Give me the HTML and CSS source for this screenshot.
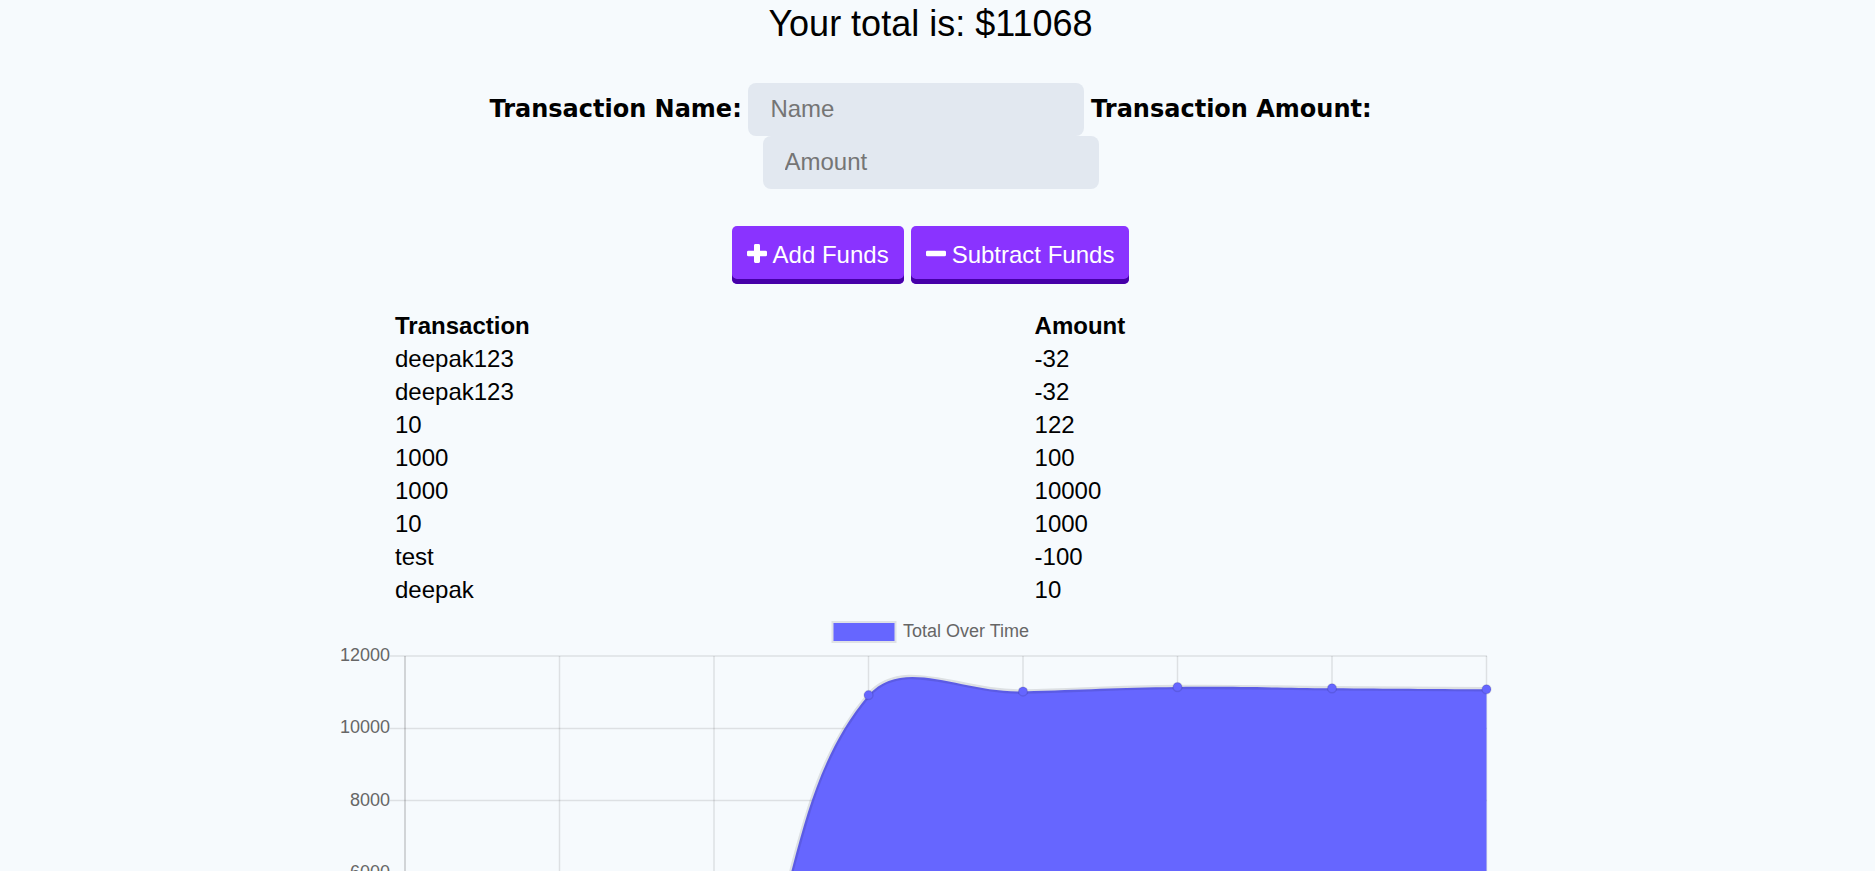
FILE: index.html
```html
<!DOCTYPE html>
<html lang="en">
<head>
  <meta charset="utf-8">
  <title>Budget Tracker</title>
  <link rel="stylesheet" href="styles.css">
</head>
<body>
  <main class="wrapper">
    <h1 class="total">Your total is: $<span id="total">11068</span></h1>

    <form class="form">
      <div class="fields">
        <label class="label" for="t-name">Transaction Name:</label>
        <input class="input" type="text" id="t-name" placeholder="Name">
        <label class="label" for="t-amount">Transaction Amount:</label>
        <input class="input" type="text" id="t-amount" placeholder="Amount">
      </div>
      <div class="actions">
        <button class="button" type="button">
          <svg class="icon" viewBox="0 0 20 24" aria-hidden="true"><path d="M8.4 2h3.2a1.4 1.4 0 0 1 1.4 1.4V8.700h5.600a1.400 1.400 0 0 1 1.400 1.400v2.800a1.400 1.400 0 0 1-1.400 1.400H13v5.300a1.400 1.400 0 0 1-1.400 1.400H8.400A1.400 1.400 0 0 1 7 19.600V14.300H1.400A1.400 1.400 0 0 1 0 12.900v-2.800A1.400 1.400 0 0 1 1.400 8.700H7V3.400A1.400 1.400 0 0 1 8.400 2z"/></svg>
          Add Funds
        </button>
        <button class="button" type="button">
          <svg class="icon" viewBox="0 0 20 24" aria-hidden="true"><rect x="0" y="8.700" width="20" height="5.600" rx="1.400"/></svg>
          Subtract Funds
        </button>
      </div>
    </form>

    <table class="transactions">
      <thead>
        <tr><th>Transaction</th><th>Amount</th></tr>
      </thead>
      <tbody>
        <tr><td>deepak123</td><td>-32</td></tr>
        <tr><td>deepak123</td><td>-32</td></tr>
        <tr><td>10</td><td>122</td></tr>
        <tr><td>1000</td><td>100</td></tr>
        <tr><td>1000</td><td>10000</td></tr>
        <tr><td>10</td><td>1000</td></tr>
        <tr><td>test</td><td>-100</td></tr>
        <tr><td>deepak</td><td>10</td></tr>
      </tbody>
    </table>

    <svg class="chart" viewBox="0 0 1200 600" role="img" aria-label="Total Over Time">
      <rect class="swatch" x="501.500" y="16" width="63" height="20"/>
      <text class="tick" x="572" y="31">Total Over Time</text>
      <g fill="none" stroke-width="1.5">
        <path class="grid" d="M59 50H1156M59 122.500H1156M59 194.500H1156M59 267H1156M59 339.500H1156M59 412H1156M59 556.500H1156"/>
        <path class="grid" d="M228.500 50V571M383 50V571M537.500 50V571M692 50V571M846.500 50V571M1001 50V571M1155.500 50V571"/>
        <path class="axis" d="M74 50V571M59 484H1156"/>
      </g>
      <g class="tick tick-y">
        <text x="59" y="55">12000</text>
        <text x="59" y="127">10000</text>
        <text x="59" y="200">8000</text>
        <text x="59" y="272">6000</text>
        <text x="59" y="345">4000</text>
        <text x="59" y="417">2000</text>
        <text x="59" y="490">0</text>
        <text x="59" y="562">-2000</text>
      </g>
      <path class="area" d="M74 483.600C135.800 485.100 167.500 493.700 228.500 487.300C291.100 480.700 347.500 496.900 383 451.100C471.100 337.600 448.700 194.200 537.500 89.100C572.300 49.600 630.200 87 692 85.400C753.800 83.800 784.700 81.600 846.500 81C908.300 80.400 939.200 81.700 1001 82.200C1062.800 82.700 1093.700 82.900 1155.500 83.300V484H74z"/>
      <path class="line" fill="none" stroke-width="4.5" d="M74 483.600C135.800 485.100 167.500 493.700 228.500 487.300C291.100 480.700 347.500 496.900 383 451.100C471.100 337.600 448.700 194.200 537.500 89.100C572.300 49.600 630.200 87 692 85.400C753.800 83.800 784.700 81.600 846.500 81C908.300 80.400 939.200 81.700 1001 82.200C1062.800 82.700 1093.700 82.900 1155.500 83.300"/>
      <g class="point" stroke-width="1.5">
        <circle cx="74" cy="483.600" r="4.500"/>
        <circle cx="228.500" cy="487.300" r="4.500"/>
        <circle cx="383" cy="451.100" r="4.500"/>
        <circle cx="537.500" cy="89.100" r="4.500"/>
        <circle cx="692" cy="85.400" r="4.500"/>
        <circle cx="846.500" cy="81" r="4.500"/>
        <circle cx="1001" cy="82.200" r="4.500"/>
        <circle cx="1155.500" cy="83.300" r="4.500"/>
      </g>
    </svg>
  </main>
</body>
</html>
```

FILE: styles.css
```css
* {
  box-sizing: border-box;
}

body {
  margin: 0;
  padding-right: 14px;
  background: #f6fafd;
  color: #000;
  font: 24px/31px "Liberation Sans", Arial, sans-serif;
}

.wrapper {
  max-width: 1200px;
  margin: 0 auto;
}

.total {
  margin: 0;
  font-size: 36px;
  font-weight: 400;
  line-height: 47px;
  text-align: center;
}

.form {
  padding-top: 36px;
  text-align: center;
}

.label {
  font-family: "Arial Black", "DejaVu Sans", sans-serif;
  font-weight: 900;
  vertical-align: middle;
}

.input {
  width: 336px;
  height: 53px;
  padding: 0 22px 2px;
  border: 0;
  border-radius: 8px;
  background: #e2e8f0;
  font: inherit;
  vertical-align: middle;
}

.input::placeholder {
  color: #757575;
}

.actions {
  display: flex;
  justify-content: center;
  gap: 7px;
  padding: 37px 0 25px;
}

.button {
  display: flex;
  align-items: center;
  gap: 6px;
  height: 58px;
  padding: 0 15px 2px;
  border: 0;
  border-radius: 5px;
  background: #8a33ff;
  box-shadow: inset 0 -5px 0 #4600a8;
  color: #fff;
  font: inherit;
}

.icon {
  width: 20px;
  height: 24px;
  fill: currentColor;
}

.transactions {
  width: 1073px;
  max-width: 100%;
  margin: 0 auto;
  border-collapse: collapse;
  text-align: left;
}

.transactions th,
.transactions td {
  padding: 1px;
}

.chart {
  display: block;
  width: 100%;
  height: auto;
}

.tick {
  fill: #666;
  font-size: 18px;
}

.tick-y {
  text-anchor: end;
}

.swatch {
  fill: #66f;
  stroke: #dfe2e6;
  stroke-width: 2px;
}

.grid,
.line,
.point {
  stroke: rgba(0, 0, 0, 0.1);
}

.axis {
  stroke: rgba(0, 0, 0, 0.2);
}

.area,
.point {
  fill: #66f;
}
```
